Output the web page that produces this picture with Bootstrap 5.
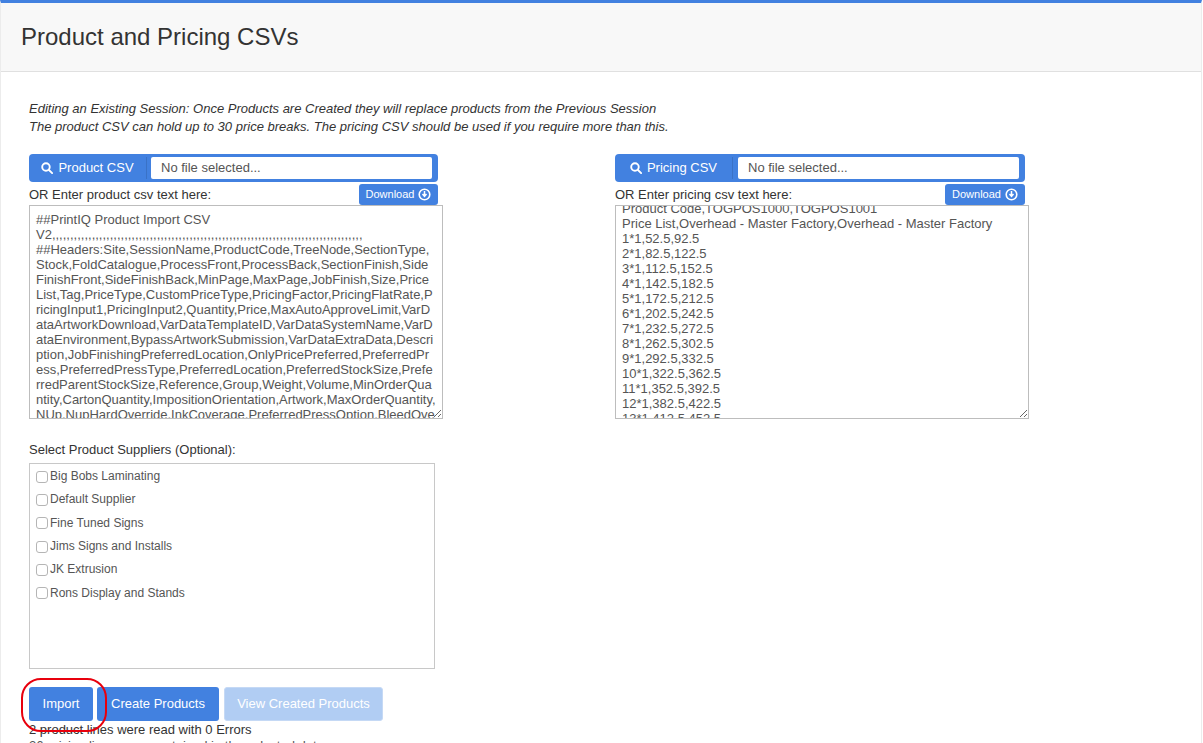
<!DOCTYPE html>
<html lang="en">
<head>
<meta charset="utf-8">
<title>Product and Pricing CSVs</title>
<link rel="stylesheet" href="https://cdn.jsdelivr.net/npm/bootstrap@5.3.0/dist/css/bootstrap.min.css">
<style>
html, body { height: 743px; overflow: hidden; }
body { font-family: "Liberation Sans", Arial, sans-serif; font-size: 13px; color: #333; line-height: 15px; background: #fff; }
.shell { border-top: 3px solid #4281e0; border-left: 1px solid #ececec; border-right: 1px solid #ececec; margin-right: 1px; height: 743px; overflow: hidden; }
.page-head { background: #f8f8f8; border-bottom: 1px solid #e0e0e0; height: 69px; padding: 20px 0 0 20px; }
.page-head h1 { font-size: 24px; line-height: 28px; font-weight: 400; margin: 0; color: #333; }
.page-body { padding: 28px 0 0 28px; }
.intro { font-style: italic; font-size: 13px; line-height: 18px; margin: 0 0 18px; }
.csv-columns { display: flex; }
.csv-left { width: 586px; }
.csv-right { width: 414px; }
.file-pick { display: flex; width: 409px; height: 28px; background: #4281e0; border-radius: 4px; padding: 3px 6px 3px 0; }
.csv-right .file-pick { width: 410px; }
.file-label { width: 118px; height: 22px; color: #fff; font-size: 13px; line-height: 22px; border-right: 1px solid #3a72c6; display: flex; align-items: center; justify-content: center; gap: 5px; flex: none; }
.file-name { flex: 1; background: #fff; margin-left: 4px; border-radius: 2px; color: #555; font-size: 13px; line-height: 22px; padding-left: 10px; }
.csv-right .file-name { margin-left: 5px; }
.csv-sub { display: flex; justify-content: space-between; width: 409px; height: 21px; margin-top: 2px; }
.csv-right .csv-sub { width: 410px; }
.csv-sub span { font-size: 13px; line-height: 22px; }
.btn-dl { background: #4281e0; color: #fff; font-size: 11px; line-height: 19px; height: 21px; width: 79px; padding: 0; border: 0; border-radius: 3px; display: flex; align-items: center; justify-content: center; gap: 4px; }
.csv-right .btn-dl { width: 80px; }
.csv-text { display: block; width: 414px; height: 214px; border: 1px solid #bdbdbd; border-radius: 0; padding: 6px; color: #555; font-family: "Liberation Sans", Arial, sans-serif; font-size: 13px; line-height: 15px; word-break: break-all; outline: none; }
.suppliers-title { font-size: 13px; line-height: 15px; margin: 23px 0 6px; }
.suppliers { width: 406px; height: 206px; border: 1px solid #c8c8c8; padding: 1px 5px; color: #555; font-size: 12px; }
.supplier-row { display: flex; align-items: center; height: 23.3px; }
.supplier-row input { appearance: none; width: 12px; height: 12px; margin: 0 2px 0 1px; flex: none; background: #fff; border: 1px solid #b5b5b5; border-radius: 3px; }
.actions { display: flex; gap: 4px; margin-top: 18px; }
.act { background: #4281e0; color: #fff; font-size: 13px; line-height: 16px; height: 34px; padding: 0; border: 0; border-radius: 3px; }
.act-import { width: 64px; }
.act-create { width: 122px; }
.act-view { width: 159px; margin-left: 1px; background: #b1cdf3; border: 1px solid #c5d9f5; }
.ring { position: absolute; left: 21px; top: 678px; width: 86px; height: 54px; border: 2px solid #e8000d; border-radius: 20px; pointer-events: none; }
.result { margin-top: 1px; font-size: 13px; line-height: 15px; }
.result-next { color: #555; margin-top: 1px; }
</style>
</head>
<body>
<div class="shell">
  <div class="page-head"><h1>Product and Pricing CSVs</h1></div>
  <div class="page-body">
    <p class="intro">Editing an Existing Session: Once Products are Created they will replace products from the Previous Session<br>The product CSV can hold up to 30 price breaks. The pricing CSV should be used if you require more than this.</p>
    <div class="csv-columns">
      <div class="csv-left">
        <div class="file-pick">
          <div class="file-label"><svg width="12" height="12" viewBox="0 0 14 14" fill="none" stroke="#fff" stroke-width="2.2"><circle cx="5.8" cy="5.8" r="4.4"/><path d="M9 9l4 4" stroke-linecap="round"/></svg>Product CSV</div>
          <div class="file-name">No file selected...</div>
        </div>
        <div class="csv-sub"><span>OR Enter product csv text here:</span>
          <button class="btn btn-dl" type="button">Download <svg width="13" height="13" viewBox="0 0 13 13"><circle cx="6.5" cy="6.5" r="5.3" fill="none" stroke="#fff" stroke-width="1.6"/><path d="M6.5 3v4.2M4.5 6l2 2.4 2-2.4" fill="none" stroke="#fff" stroke-width="1.5"/></svg></button>
        </div>
        <textarea class="csv-text" spellcheck="false">##PrintIQ Product Import CSV
V2,,,,,,,,,,,,,,,,,,,,,,,,,,,,,,,,,,,,,,,,,,,,,,,,,,,,,,,,,,,,,,,,,,,,,,,,,,,,,,,,,,,,,,
##Headers:Site,SessionName,ProductCode,TreeNode,SectionType,Stock,FoldCatalogue,ProcessFront,ProcessBack,SectionFinish,SideFinishFront,SideFinishBack,MinPage,MaxPage,JobFinish,Size,PriceList,Tag,PriceType,CustomPriceType,PricingFactor,PricingFlatRate,PricingInput1,PricingInput2,Quantity,Price,MaxAutoApproveLimit,VarDataArtworkDownload,VarDataTemplateID,VarDataSystemName,VarDataEnvironment,BypassArtworkSubmission,VarDataExtraData,Description,JobFinishingPreferredLocation,OnlyPricePreferred,PreferredPress,PreferredPressType,PreferredLocation,PreferredStockSize,PreferredParentStockSize,Reference,Group,Weight,Volume,MinOrderQuantity,CartonQuantity,ImpositionOrientation,Artwork,MaxOrderQuantity,NUp,NupHardOverride,InkCoverage,PreferredPressOption,BleedOverride</textarea>
      </div>
      <div class="csv-right">
        <div class="file-pick">
          <div class="file-label"><svg width="12" height="12" viewBox="0 0 14 14" fill="none" stroke="#fff" stroke-width="2.2"><circle cx="5.8" cy="5.8" r="4.4"/><path d="M9 9l4 4" stroke-linecap="round"/></svg>Pricing CSV</div>
          <div class="file-name">No file selected...</div>
        </div>
        <div class="csv-sub"><span>OR Enter pricing csv text here:</span>
          <button class="btn btn-dl" type="button">Download <svg width="13" height="13" viewBox="0 0 13 13"><circle cx="6.5" cy="6.5" r="5.3" fill="none" stroke="#fff" stroke-width="1.6"/><path d="M6.5 3v4.2M4.5 6l2 2.4 2-2.4" fill="none" stroke="#fff" stroke-width="1.5"/></svg></button>
        </div>
        <textarea class="csv-text" id="pricing" spellcheck="false">Product Name,Poster A,Poster B
Product Code,TOGPOS1000,TOGPOS1001
Price List,Overhead - Master Factory,Overhead - Master Factory
1*1,52.5,92.5
2*1,82.5,122.5
3*1,112.5,152.5
4*1,142.5,182.5
5*1,172.5,212.5
6*1,202.5,242.5
7*1,232.5,272.5
8*1,262.5,302.5
9*1,292.5,332.5
10*1,322.5,362.5
11*1,352.5,392.5
12*1,382.5,422.5
13*1,412.5,452.5
14*1,442.5,482.5</textarea>
      </div>
    </div>
    <div class="suppliers-title">Select Product Suppliers (Optional):</div>
    <div class="suppliers">
      <label class="supplier-row"><input type="checkbox">Big Bobs Laminating</label>
      <label class="supplier-row"><input type="checkbox">Default Supplier</label>
      <label class="supplier-row"><input type="checkbox">Fine Tuned Signs</label>
      <label class="supplier-row"><input type="checkbox">Jims Signs and Installs</label>
      <label class="supplier-row"><input type="checkbox">JK Extrusion</label>
      <label class="supplier-row"><input type="checkbox">Rons Display and Stands</label>
    </div>
    <div class="actions">
      <button class="btn act act-import" type="button">Import</button>
      <button class="btn act act-create" type="button">Create Products</button>
      <button class="btn act act-view" type="button">View Created Products</button>
    </div>
    <div class="result">2 product lines were read with 0 Errors</div>
    <div class="result-next">26 pricing lines were contained in the selected data</div>
  </div>
  <div class="ring"></div>
</div>
<script src="https://cdn.jsdelivr.net/npm/bootstrap@5.3.0/dist/js/bootstrap.bundle.min.js"></script>
<script>document.getElementById('pricing').scrollTop = 26;</script>
</body>
</html>
